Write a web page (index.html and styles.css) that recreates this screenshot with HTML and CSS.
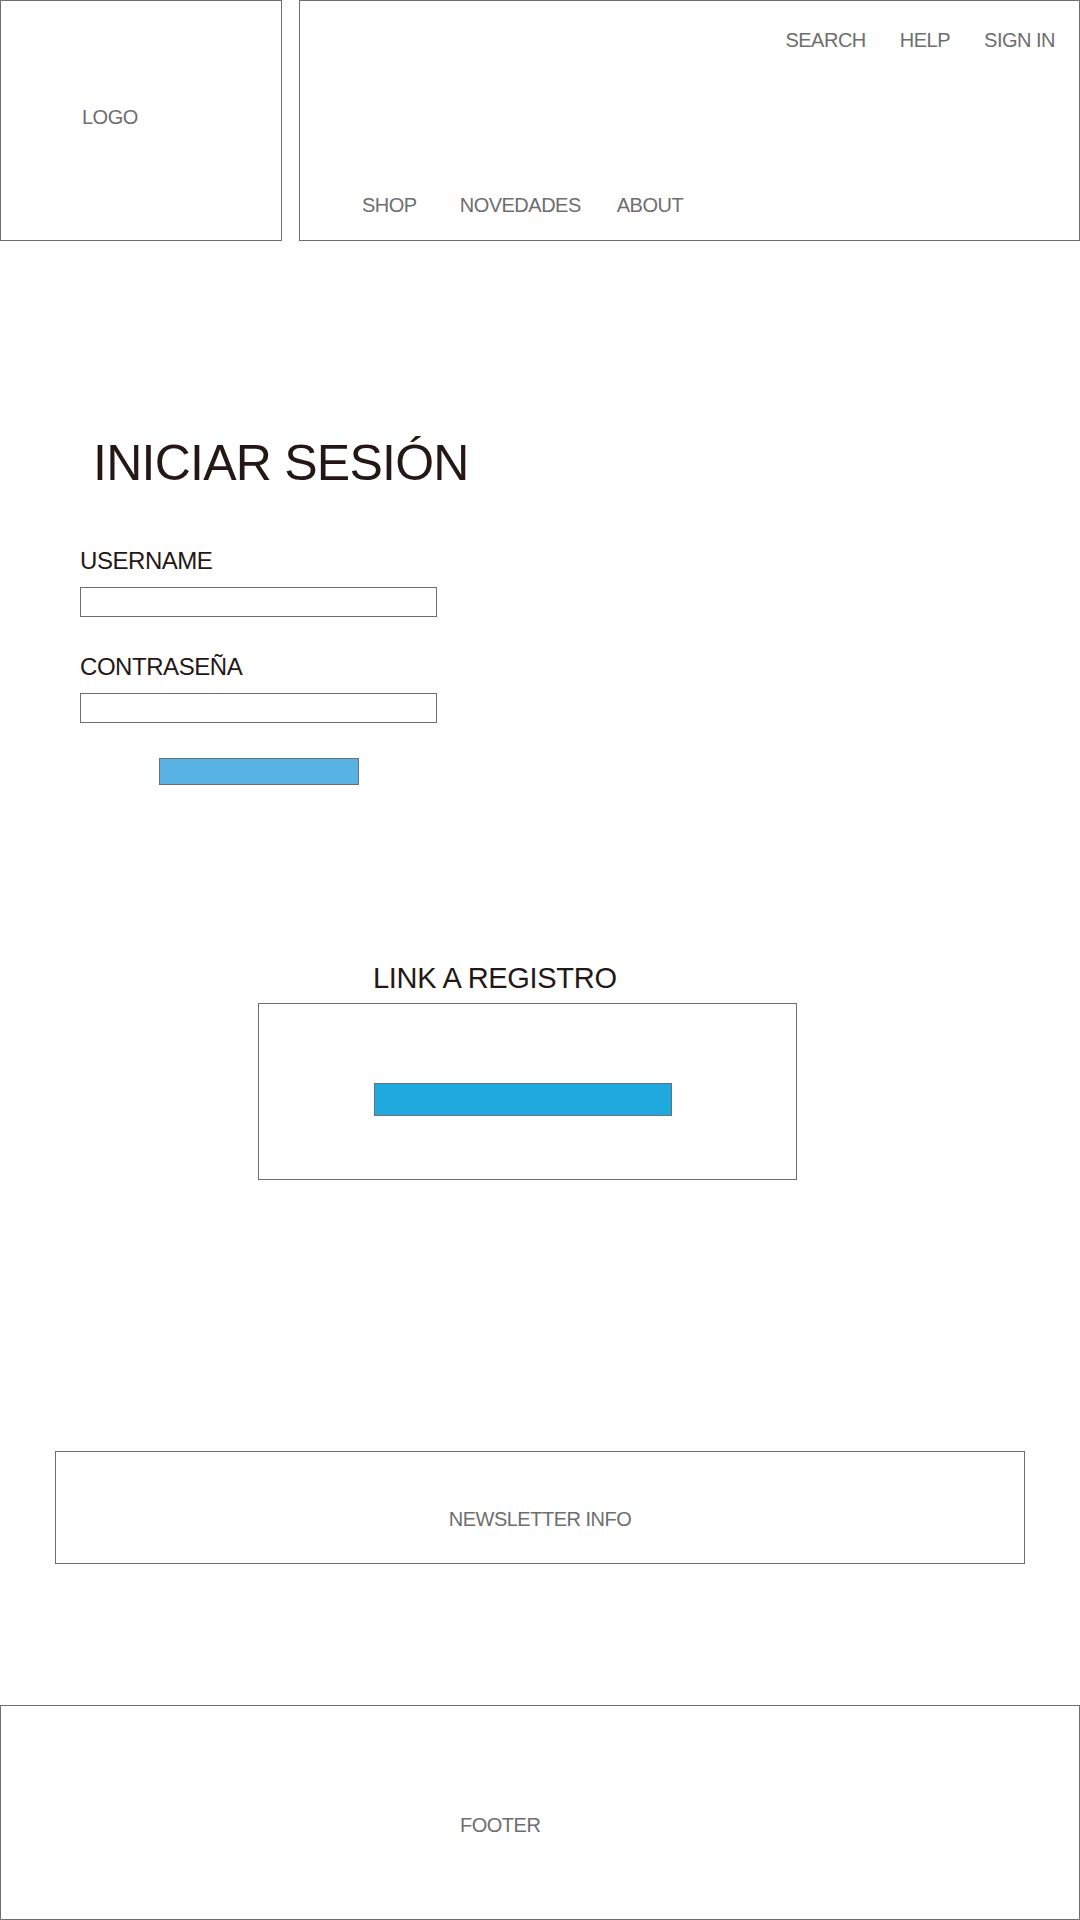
FILE: index.html
```html
<!DOCTYPE html>
<html lang="es">
<head>
<meta charset="utf-8">
<title>Iniciar sesión</title>
<link rel="stylesheet" href="styles.css">
</head>
<body>
<header class="site-header">
  <div class="logo-box"><span class="logo">LOGO</span></div>
  <nav class="nav-box">
    <ul class="nav-util">
      <li class="nav-item">SEARCH</li>
      <li class="nav-item">HELP</li>
      <li class="nav-item">SIGN IN</li>
    </ul>
    <ul class="nav-main">
      <li class="nav-item nav-shop">SHOP</li>
      <li class="nav-item">NOVEDADES</li>
      <li class="nav-item">ABOUT</li>
    </ul>
  </nav>
</header>
<main>
  <section class="login">
    <h1 class="login-title">INICIAR SESIÓN</h1>
    <form class="login-form">
      <label class="field-label" for="username">USERNAME</label>
      <input class="field-input" id="username" type="text">
      <label class="field-label field-label-gap" for="password">CONTRASEÑA</label>
      <input class="field-input" id="password" type="password">
      <button class="btn-login" type="button" aria-label="Entrar"></button>
    </form>
  </section>
  <section class="register">
    <h2 class="register-title">LINK A REGISTRO</h2>
    <div class="register-box">
      <a class="btn-register" href="#" aria-label="Registro"></a>
    </div>
  </section>
  <section class="newsletter">NEWSLETTER INFO</section>
</main>
<footer class="site-footer">FOOTER</footer>
</body>
</html>
```
FILE: styles.css
```css
* {
  box-sizing: border-box;
  margin: 0;
  padding: 0;
}

body {
  margin: 0;
  width: 1080px;
  height: 1920px;
  overflow: hidden;
  background: #ffffff;
  font-family: "Liberation Sans", Arial, sans-serif;
}

/* ---------- header ---------- */
.site-header {
  display: flex;
  gap: 17px;
  height: 241px;
}

.logo-box {
  width: 282px;
  height: 241px;
  border: 1px solid #6f6f6f;
  padding: 106px 0 0 81px;
}

.logo {
  display: block;
  font-size: 20px;
  line-height: 20px;
  letter-spacing: -0.5px;
  color: #6e6e6e;
}

.nav-box {
  width: 781px;
  height: 241px;
  border: 1px solid #6f6f6f;
  display: flex;
  flex-direction: column;
  justify-content: space-between;
  padding: 29px 24px 25px 62px;
}

.nav-util,
.nav-main {
  list-style: none;
  display: flex;
}

.nav-util {
  justify-content: flex-end;
  gap: 34px;
}

.nav-main {
  gap: 36px;
}

.nav-shop {
  margin-right: 7px;
}

.nav-item {
  font-size: 20px;
  line-height: 20px;
  letter-spacing: -0.5px;
  color: #6e6e6e;
}

/* ---------- login ---------- */
.login-title {
  margin: 197px 0 0 93px;
  font-size: 50px;
  line-height: 50px;
  font-weight: normal;
  letter-spacing: -0.75px;
  color: #231815;
}

.login-form {
  margin: 61px 0 0 80px;
  display: flex;
  flex-direction: column;
  align-items: flex-start;
}

.field-label {
  display: block;
  font-size: 24px;
  line-height: 24px;
  letter-spacing: -0.45px;
  color: #231815;
}

.field-label-gap {
  margin-top: 38px;
}

.field-input {
  display: block;
  margin-top: 14px;
  width: 357px;
  height: 30px;
  border: 1px solid #6f6f6f;
  background: #ffffff;
  outline: none;
  appearance: none;
}

.btn-login {
  display: block;
  margin: 35px 0 0 79px;
  width: 200px;
  height: 27px;
  border: 1px solid #6f6f6f;
  background: #58b2e3;
  appearance: none;
}

/* ---------- register ---------- */
.register {
  margin: 179px 0 0 258px;
  width: 539px;
}

.register-title {
  padding-left: 115px;
  font-size: 29px;
  line-height: 29px;
  font-weight: normal;
  letter-spacing: -0.3px;
  color: #231815;
}

.register-box {
  margin-top: 10px;
  height: 177px;
  border: 1px solid #6f6f6f;
  padding: 79px 0 0 115px;
}

.btn-register {
  display: block;
  width: 298px;
  height: 33px;
  border: 1px solid #6f6f6f;
  background: #1faadf;
}

/* ---------- newsletter ---------- */
.newsletter {
  margin: 271px 0 0 55px;
  width: 970px;
  height: 113px;
  border: 1px solid #6f6f6f;
  padding-top: 57px;
  text-align: center;
  font-size: 20px;
  line-height: 20px;
  letter-spacing: -0.5px;
  color: #6e6e6e;
}

/* ---------- footer ---------- */
.site-footer {
  margin-top: 141px;
  width: 1080px;
  height: 215px;
  border: 1px solid #6f6f6f;
  padding: 109px 0 0 459px;
  font-size: 20px;
  line-height: 20px;
  letter-spacing: -0.5px;
  color: #6e6e6e;
}
```
